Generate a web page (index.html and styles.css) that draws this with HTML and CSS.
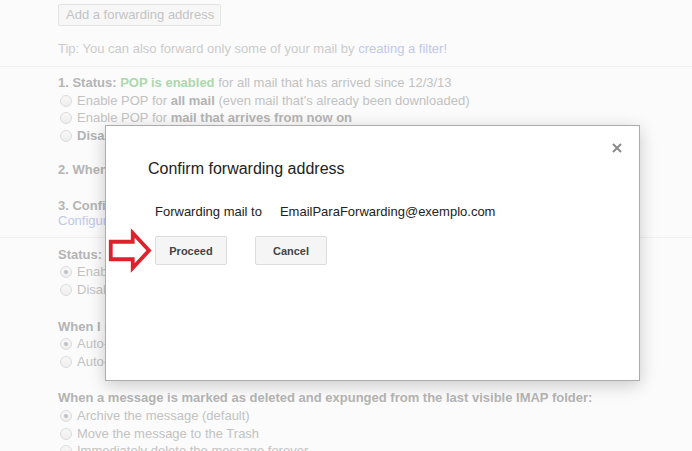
FILE: index.html
```html
<!DOCTYPE html>
<html>
<head>
<meta charset="utf-8">
<title>Confirm forwarding address</title>
<link rel="stylesheet" href="styles.css">
</head>
<body>
<div class="page">
  <div class="fwd">
    <span class="bg-btn">Add a forwarding address</span>
    <div class="tip">Tip: You can also forward only some of your mail by <span class="link">creating a filter!</span></div>
  </div>

  <div class="section pop">
    <div class="row"><b>1. Status:</b> <b class="green">POP is enabled</b> for all mail that has arrived since 12/3/13</div>
    <div class="row"><span class="radio"></span>Enable POP for <b>all mail</b> (even mail that's already been downloaded)</div>
    <div class="row"><span class="radio"></span>Enable POP for <b>mail that arrives from now on</b></div>
    <div class="row"><span class="radio"></span><b>Disable</b> POP</div>
    <div class="row group g2"><b>2. When messages are accessed with POP</b></div>
    <div class="row group g3"><b>3. Configure your email client</b> (e.g. Outlook, Eudora, Netscape Mail)</div>
    <div class="row tight"><span class="link">Configuration instructions</span></div>
  </div>

  <div class="section imap">
    <div class="row"><b>Status: IMAP is disabled</b></div>
    <div class="row"><span class="radio on"></span>Enable IMAP</div>
    <div class="row"><span class="radio"></span>Disable IMAP</div>
    <div class="row group"><b>When I mark a message in IMAP as deleted:</b></div>
    <div class="row"><span class="radio on"></span>Auto-Expunge on - Immediately update the server. (default)</div>
    <div class="row"><span class="radio"></span>Auto-Expunge off - Wait for the client to update the server.</div>
    <div class="row group"><b>When a message is marked as deleted and expunged from the last visible IMAP folder:</b></div>
    <div class="row"><span class="radio on"></span>Archive the message (default)</div>
    <div class="row"><span class="radio"></span>Move the message to the Trash</div>
    <div class="row"><span class="radio"></span>Immediately delete the message forever</div>
  </div>
</div>

<div class="dialog">
  <span class="close" aria-label="Close">
    <svg width="10" height="10" viewBox="0 0 10 10"><path d="M1 1L9 9M9 1L1 9" stroke="#8a8a8a" stroke-width="2" fill="none"/></svg>
  </span>
  <div class="dlg-title">Confirm forwarding address</div>
  <div class="dlg-body">
    <div class="msg"><span class="lbl">Forwarding mail to</span><span class="addr">EmailParaForwarding@exemplo.com</span></div>
    <div class="actions">
      <button class="btn">Proceed</button>
      <button class="btn">Cancel</button>
    </div>
  </div>
</div>

<svg class="arrow" width="50" height="50" viewBox="0 0 50 50">
  <polygon points="5.75,15.75 27.75,15.75 27.75,7 44,24.5 27.75,42 27.75,33.25 5.75,33.25" fill="#fff" stroke="#e0202a" stroke-width="3.8" stroke-linejoin="miter"/>
</svg>
</body>
</html>
```

FILE: styles.css
```css
html, body {
  margin: 0;
  padding: 0;
}
body {
  background: #fbfbfb;
  font-family: "Liberation Sans", Arial, sans-serif;
  font-size: 13px;
  color: #c2c2c2;
  overflow: hidden;
  height: 451px;
}
.page {
  padding-top: 4px;
}
.fwd {
  padding-left: 58px;
  padding-bottom: 8px;
}
.bg-btn {
  display: inline-block;
  box-sizing: border-box;
  height: 22px;
  line-height: 20px;
  padding: 0 6px 0 7px;
  white-space: nowrap;
  border: 1px solid #e3e3e3;
  border-radius: 2px;
  background: #f7f7f7;
  color: #c4c4c4;
  font-size: 13px;
  vertical-align: top;
}
.tip {
  margin-top: 14px;
  line-height: 18px;
  color: #cbcbcb;
}
.link {
  color: #c0c8ea;
}
.section {
  border-top: 1px solid #efefef;
  padding-left: 58px;
}
.pop {
  padding-top: 7px;
  padding-bottom: 7px;
}
.imap {
  padding-top: 8px;
}
.row {
  line-height: 17.6px;
  height: 17.6px;
  white-space: nowrap;
}
.row b {
  color: #b4b4b4;
}
.row b.green {
  color: #acd8ac;
}
.row.group {
  margin-top: 19px;
}
.row.g2 {
  margin-top: 16.6px;
}
.row.g3 {
  margin-top: 18px;
}
.row.tight {
  margin-top: -2px;
}
.radio {
  display: inline-block;
  box-sizing: border-box;
  width: 12px;
  height: 12px;
  border-radius: 50%;
  border: 1px solid #dcdcdc;
  background: linear-gradient(#f8f8f8, #ededed);
  margin: 0 5px 0 2px;
  position: relative;
  vertical-align: -2px;
}
.radio.on::after {
  content: "";
  position: absolute;
  left: 3px;
  top: 3px;
  width: 4px;
  height: 4px;
  border-radius: 50%;
  background: #c0c0c0;
}

.dialog {
  position: absolute;
  left: 105px;
  top: 125px;
  width: 491px;
  height: 221px;
  padding: 33px 0 0 42px;
  background: #fff;
  border: 1px solid #acacac;
  box-shadow: 0 4px 16px rgba(0, 0, 0, 0.2);
  color: #222;
}
.close {
  position: absolute;
  right: 17px;
  top: 17px;
  width: 10px;
  height: 10px;
  display: block;
}
.close svg {
  display: block;
}
.dlg-title {
  font-size: 16px;
  line-height: 20px;
}
.dlg-body {
  padding-left: 7px;
}
.msg {
  margin-top: 24px;
  line-height: 18px;
  display: flex;
  gap: 18px;
  white-space: nowrap;
}
.actions {
  margin-top: 15px;
  display: flex;
  gap: 28px;
}
.btn {
  box-sizing: border-box;
  width: 72px;
  height: 29px;
  border: 1px solid #dcdcdc;
  border-radius: 2px;
  background: #f5f5f5;
  color: #444;
  font-family: "Liberation Sans", Arial, sans-serif;
  font-size: 11px;
  font-weight: bold;
  padding: 0;
}
.arrow {
  position: absolute;
  left: 105px;
  top: 226px;
}
```
